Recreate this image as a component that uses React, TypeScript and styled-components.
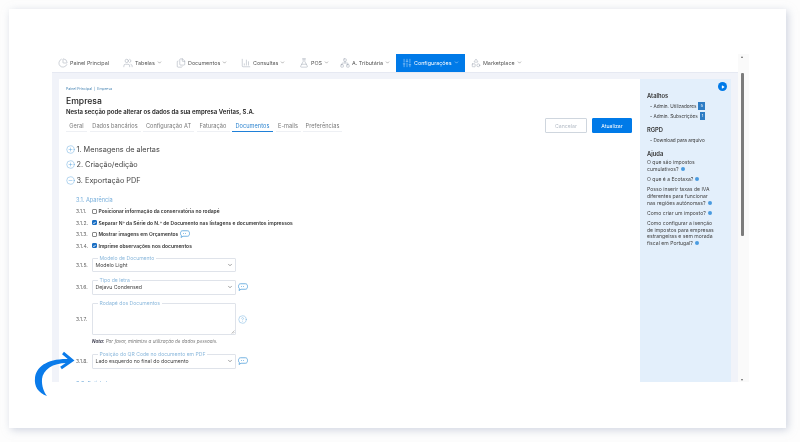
import styled, { createGlobalStyle } from "styled-components";
import {
  ChevronDown,
  CirclePlus,
  CircleMinus,
  CircleHelp,
  Files,
  FlaskConical,
  ChartColumn,
  Network,
  PieChart,
  Play,
  Shapes,
  SlidersVertical,
  Users,
} from "lucide-react";

const GlobalStyle = createGlobalStyle`
  html, body {
    margin: 0;
    padding: 0;
    background: #fdfdfd;
  }
  body {
    font-family: Inter, "Liberation Sans", sans-serif;
    color: #333;
    overflow: hidden;
  }
`;

const Stage = styled.div`
  width: 800px;
  height: 442px;
  padding: 9px 14px 14px 9px;
  box-sizing: border-box;
  position: relative;
  filter: blur(0.3px);
`;

const Card = styled.div`
  width: 777px;
  height: 419px;
  box-sizing: border-box;
  background: #fff;
  box-shadow: 2px 2px 8px rgba(170, 178, 200, 0.55);
  padding: 45px 0 0 43px;
`;

const Shell = styled.div`
  width: 697px;
  height: 328px;
  display: grid;
  grid-template-columns: 686px 11px;
`;

const Main = styled.div`
  display: flex;
  flex-direction: column;
  height: 328px;
  overflow: hidden;
`;

const Nav = styled.nav`
  height: 18px;
  display: flex;
  align-items: stretch;
  background: #fff;
  border-bottom: 1px solid #e6e9f2;
`;

const NavItem = styled.div<{ $w: number; $active?: boolean }>`
  width: ${(p) => p.$w}px;
  display: flex;
  align-items: center;
  gap: 2px;
  padding: 0 0 1px 6px;
  box-sizing: border-box;
  font-size: 5.4px;
  color: ${(p) => (p.$active ? "#fff" : "#555")};
  background: ${(p) => (p.$active ? "#007ae8" : "transparent")};
  white-space: nowrap;
`;

const Body = styled.div`
  flex: 1;
  display: grid;
  grid-template-columns: 581px 91px;
  background: #f1f3f9;
  padding: 6px 0 0 7px;
  min-height: 0;
`;

const Content = styled.div`
  background: #fff;
  padding: 8px 8px 0 7px;
  overflow: hidden;
`;

const Crumbs = styled.div`
  font-size: 3.6px;
  color: #3f7fb0;
  line-height: 5px;
`;

const Title = styled.h1`
  margin: 4px 0 0;
  font-size: 8.6px;
  font-weight: 500;
  color: #222;
  line-height: 11px;
`;

const Subtitle = styled.p`
  margin: 0;
  font-size: 6px;
  font-weight: 600;
  color: #222;
  line-height: 9px;
`;

const TabRow = styled.div`
  display: flex;
  align-items: flex-end;
  justify-content: space-between;
  margin-top: 2px;
  height: 15px;
`;

const Tabs = styled.div`
  display: flex;
  gap: 2.5px;
  margin-bottom: 1.5px;
`;

const Tab = styled.div<{ $active?: boolean; $w: number }>`
  width: ${(p) => p.$w}px;
  height: 11px;
  box-sizing: border-box;
  text-align: center;
  font-size: 5.6px;
  letter-spacing: 0.05px;
  line-height: 10px;
  color: ${(p) => (p.$active ? "#2b83cf" : "#777")};
  border-bottom: 1px solid ${(p) => (p.$active ? "#1f80d8" : "#eef0f4")};
  white-space: nowrap;
`;

const Actions = styled.div`
  display: flex;
  gap: 5px;
  align-items: center;
`;

const Btn = styled.button<{ $primary?: boolean }>`
  width: ${(p) => (p.$primary ? 40 : 42)}px;
  height: 15px;
  padding: 0;
  font-family: inherit;
  font-size: 5.2px;
  border-radius: 1px;
  color: ${(p) => (p.$primary ? "#fff" : "#b4bcc6")};
  background: ${(p) => (p.$primary ? "#007ae8" : "#fff")};
  border: 1px solid ${(p) => (p.$primary ? "#007ae8" : "#cfd6de")};
`;

const Sections = styled.div`
  margin-top: 8.25px;
`;

const Section = styled.div`
  display: flex;
  align-items: center;
  gap: 1.5px;
  font-size: 7.3px;
  color: #444;
  height: 15.5px;
  white-space: nowrap;
`;

const Sub = styled.div<{ $top: number }>`
  margin: ${(p) => p.$top}px 0 1px 10px;
  font-size: 5.6px;
  color: #76aedb;
  line-height: 8px;
`;

const Row = styled.div`
  display: flex;
  align-items: center;
  height: 11.6px;
  margin-left: 10px;
  font-size: 4.98px;
  font-weight: 600;
  color: #333;
  white-space: nowrap;
`;

const Num = styled.span`
  width: 15.5px;
  flex: none;
  font-size: 5px;
  font-weight: 400;
  color: #666;
`;

const Check = styled.span<{ $on?: boolean }>`
  width: 5px;
  height: 5px;
  flex: none;
  margin-right: 2px;
  border-radius: 1px;
  box-sizing: border-box;
  border: 0.6px solid ${(p) => (p.$on ? "#1a6fc4" : "#888")};
  background: ${(p) => (p.$on ? "#1a6fc4" : "#fff")};
  color: #fff;
  font-size: 4px;
  line-height: 4px;
  text-align: center;
  overflow: hidden;
`;

const FieldRow = styled.div<{ $h: number; $top: number }>`
  display: flex;
  align-items: center;
  height: ${(p) => p.$h}px;
  margin: ${(p) => p.$top}px 0 0 10px;
  font-size: 5px;
  color: #666;
`;

const Field = styled.div<{ $h: number }>`
  position: relative;
  width: 144.5px;
  height: ${(p) => p.$h}px;
  box-sizing: border-box;
  border: 1px solid #dfe3ea;
  border-radius: 1px;
  padding: 0 2px 0 3px;
  display: flex;
  align-items: center;
  justify-content: space-between;
  color: #444;
  font-size: 5.2px;
  white-space: nowrap;
`;

const Legend = styled.span`
  position: absolute;
  top: -4px;
  left: 5px;
  padding: 0 2px;
  background: #fff;
  font-size: 5.1px;
  line-height: 6px;
  color: #8bb8dc;
`;

const Grip = styled.svg`
  position: absolute;
  right: 0.5px;
  bottom: 0.5px;
`;

const Hint = styled.span`
  margin-left: 2px;
  display: flex;
  color: #4a9bd8;
`;

const Note = styled.div`
  margin: 3px 0 0 26px;
  font-size: 4.6px;
  font-style: italic;
  color: #777;
  line-height: 7px;
  b {
    color: #445;
  }
`;

const Aside = styled.aside`
  position: relative;
  background: #e3effb;
  padding: 13px 14px 0 7px;
  color: #333;
`;

const Toggle = styled.span`
  position: absolute;
  top: 3px;
  right: 4px;
  width: 9px;
  height: 9px;
  border-radius: 50%;
  background: #007ae8;
  display: flex;
  align-items: center;
  justify-content: center;
  color: #fff;
`;

const AsideTitle = styled.h4<{ $top: number }>`
  margin: ${(p) => p.$top}px 0 1px;
  font-size: 5.8px;
  font-weight: 600;
  line-height: 8px;
`;

const Shortcut = styled.div`
  display: flex;
  align-items: center;
  gap: 2px;
  height: 10px;
  padding-left: 3px;
  font-size: 4.7px;
  white-space: nowrap;
`;

const Badge = styled.span`
  background: #2d7cc4;
  color: #fff;
  font-size: 4px;
  line-height: 8px;
  padding: 0 2px;
`;

const Faq = styled.p`
  margin: 0 0 3.5px;
  font-size: 5.1px;
  line-height: 6.7px;
  color: #444;
`;

const Dot = styled.span`
  display: inline-block;
  width: 4px;
  height: 4px;
  margin-left: 2px;
  border-radius: 50%;
  background: #4a9be0;
`;

const Track = styled.div`
  position: relative;
  background: #fafafa;
  height: 328px;
  padding: 0 3px;
  box-sizing: border-box;
`;

const Thumb = styled.div`
  width: 3px;
  height: 163px;
  margin-top: 19px;
  background: #7c7c7c;
  border-radius: 1px;
`;

const Caret = styled.span<{ $down?: boolean }>`
  position: absolute;
  left: 3px;
  ${(p) => (p.$down ? "bottom: 1px;" : "top: 2px;")}
  width: 0;
  height: 0;
  border-left: 1.6px solid transparent;
  border-right: 1.6px solid transparent;
  ${(p) => (p.$down ? "border-top: 2.5px solid #666;" : "border-bottom: 2.5px solid #666;")}
`;

const Arrow = styled.svg`
  position: absolute;
  left: 30px;
  top: 348px;
`;

function ChatIcon() {
  return (
    <svg width="10" height="8" viewBox="0 0 20 16" fill="none" stroke="currentColor" strokeWidth="1.5">
      <path d="M5 1.5 H15 C17.5 1.5 19 3.5 19 7 C19 10.5 17.5 12.5 15 12.5 H6 L2 15 L3 11.5 C1.5 10.5 1 9 1 7 C1 3.5 2.5 1.5 5 1.5 Z" />
      <path d="M6 7 H14" strokeDasharray="1.6 2.4" />
    </svg>
  );
}

const navItems = [
  { label: "Painel Principal", w: 65, Icon: PieChart, caret: false },
  { label: "Tabelas", w: 53, Icon: Users, caret: true },
  { label: "Documentos", w: 65, Icon: Files, caret: true },
  { label: "Consultas", w: 58, Icon: ChartColumn, caret: true },
  { label: "POS", w: 41, Icon: FlaskConical, caret: true },
  { label: "A. Tributária", w: 62, Icon: Network, caret: true },
  { label: "Configurações", w: 69, Icon: SlidersVertical, caret: true, active: true },
  { label: "Marketplace", w: 70, Icon: Shapes, caret: true },
];

const tabs = [
  { label: "Geral", w: 21 },
  { label: "Dados bancários", w: 51 },
  { label: "Configuração AT", w: 51 },
  { label: "Faturação", w: 33 },
  { label: "Documentos", w: 41, active: true },
  { label: "E-mails", w: 25 },
  { label: "Preferências", w: 39 },
];

export default function App() {
  return (
    <>
      <GlobalStyle />
      <Stage>
        <Card>
          <Shell>
            <Main>
              <Nav>
                {navItems.map(({ label, w, Icon, caret, active }) => (
                  <NavItem key={label} $w={w} $active={active}>
                    <Icon size={10} strokeWidth={1} color={active ? "#fff" : "#8b93a3"} />
                    {label}
                    {caret && <ChevronDown size={5} />}
                  </NavItem>
                ))}
              </Nav>
              <Body>
                <Content>
                  <Crumbs>Painel Principal &nbsp;|&nbsp; Empresa</Crumbs>
                  <Title>Empresa</Title>
                  <Subtitle>Nesta secção pode alterar os dados da sua empresa Veritas, S.A.</Subtitle>
                  <TabRow>
                    <Tabs>
                      {tabs.map((t) => (
                        <Tab key={t.label} $w={t.w} $active={t.active}>
                          {t.label}
                        </Tab>
                      ))}
                    </Tabs>
                    <Actions>
                      <Btn>Cancelar</Btn>
                      <Btn $primary>Atualizar</Btn>
                    </Actions>
                  </TabRow>
                  <Sections>
                    <Section>
                      <CirclePlus size={9} strokeWidth={1} color="#3f93d6" />1. Mensagens de alertas
                    </Section>
                    <Section>
                      <CirclePlus size={9} strokeWidth={1} color="#3f93d6" />2. Criação/edição
                    </Section>
                    <Section>
                      <CircleMinus size={9} strokeWidth={1} color="#3f93d6" />3. Exportação PDF
                    </Section>
                  </Sections>
                  <Sub $top={8.5}>3.1. Aparência</Sub>
                  <Row>
                    <Num>3.1.1.</Num>
                    <Check />
                    Posicionar informação da conservatória no rodapé
                  </Row>
                  <Row>
                    <Num>3.1.2.</Num>
                    <Check $on>✓</Check>
                    Separar Nº da Série do N.º de Documento nas listagens e documentos impressos
                  </Row>
                  <Row>
                    <Num>3.1.3.</Num>
                    <Check />
                    Mostrar imagens em Orçamentos
                    <Hint>
                      <ChatIcon />
                    </Hint>
                  </Row>
                  <Row>
                    <Num>3.1.4.</Num>
                    <Check $on>✓</Check>
                    Imprime observações nos documentos
                  </Row>
                  <FieldRow $h={14.3} $top={6.35}>
                    <Num>3.1.5.</Num>
                    <Field $h={14.3}>
                      <Legend>Modelo de Documento</Legend>
                      Modelo Light
                      <ChevronDown size={6} />
                    </Field>
                  </FieldRow>
                  <FieldRow $h={14.3} $top={8}>
                    <Num>3.1.6.</Num>
                    <Field $h={14.3}>
                      <Legend>Tipo de letra</Legend>
                      Dejavu Condensed
                      <ChevronDown size={6} />
                    </Field>
                    <Hint>
                      <ChatIcon />
                    </Hint>
                  </FieldRow>
                  <FieldRow $h={32} $top={8.7}>
                    <Num>3.1.7.</Num>
                    <Field $h={32}>
                      <Legend>Rodapé dos Documentos</Legend>
                      <Grip width="4" height="4" viewBox="0 0 4 4" stroke="#888" strokeWidth="0.5">
                        <path d="M0.5 3.5 L3.5 0.5 M2 3.5 L3.5 2" />
                      </Grip>
                    </Field>
                    <Hint>
                      <CircleHelp size={9} strokeWidth={1} />
                    </Hint>
                  </FieldRow>
                  <Note>
                    <b>Nota:</b> Por favor, minimize a utilização de dados pessoais.
                  </Note>
                  <FieldRow $h={14.3} $top={9}>
                    <Num>3.1.8.</Num>
                    <Field $h={14.3}>
                      <Legend>Posição do QR Code no documento em PDF</Legend>
                      Lado esquerdo no final do documento
                      <ChevronDown size={6} />
                    </Field>
                    <Hint>
                      <ChatIcon />
                    </Hint>
                  </FieldRow>
                  <Sub $top={11.5}>3.2. Entidade</Sub>
                </Content>
                <Aside>
                  <Toggle>
                    <Play size={4} fill="#fff" strokeWidth={0} />
                  </Toggle>
                  <AsideTitle $top={0}>Atalhos</AsideTitle>
                  <Shortcut>
                    - Admin. Utilizadores <Badge>5</Badge>
                  </Shortcut>
                  <Shortcut>
                    - Admin. Subscrições <Badge>1</Badge>
                  </Shortcut>
                  <AsideTitle $top={5}>RGPD</AsideTitle>
                  <Shortcut>- Download para arquivo</Shortcut>
                  <AsideTitle $top={5}>Ajuda</AsideTitle>
                  <Faq>
                    O que são impostos cumulativos?
                    <Dot />
                  </Faq>
                  <Faq>
                    O que é a Ecotaxa?
                    <Dot />
                  </Faq>
                  <Faq>
                    Posso inserir taxas de IVA diferentes para funcionar nas regiões autónomas?
                    <Dot />
                  </Faq>
                  <Faq>
                    Como criar um imposto?
                    <Dot />
                  </Faq>
                  <Faq>
                    Como configurar a isenção de impostos para empresas estrangeiras e sem morada fiscal em Portugal?
                    <Dot />
                  </Faq>
                </Aside>
              </Body>
            </Main>
            <Track>
              <Caret />
              <Thumb />
              <Caret $down />
            </Track>
          </Shell>
        </Card>
        <Arrow width="50" height="52" viewBox="30 348 50 52">
          <path
            d="M47 396 C38 393 34 386 35 378 C36 367 47 358 70 359 L70 363 C54 362 43 369 42 379 C41.5 386 44 392 47 396 Z"
            fill="#0a7bea"
          />
          <path d="M63 353 L72 360.5 L61 368" fill="none" stroke="#0a7bea" strokeWidth="3" />
        </Arrow>
      </Stage>
    </>
  );
}
